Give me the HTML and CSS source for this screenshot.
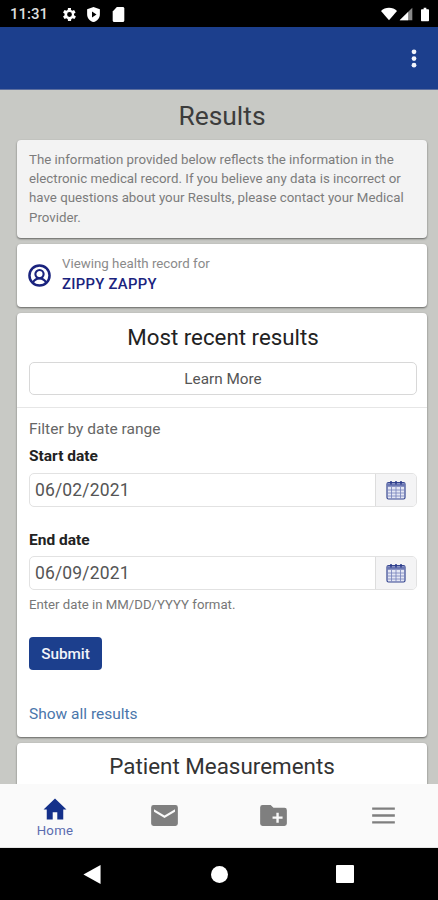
FILE: index.html
```html
<!DOCTYPE html>
<html lang="en">
<head>
<meta charset="utf-8">
<title>Results</title>
<link rel="stylesheet" href="styles.css">
</head>
<body>
<div class="phone">
  <div class="status">
    <div class="status-left">
      <span class="time">11:31</span>
      <svg class="st-ic" viewBox="3.400 2 20 20"><path fill="#fff" fill-rule="evenodd" d="M19.400 13a7.500 7.500 0 0 0 0-2l2.100-1.600-2-3.500-2.500 1a7.500 7.500 0 0 0-1.700-1L15.400 3.200h-4l-.4 2.700a7.500 7.500 0 0 0-1.700 1l-2.500-1-2 3.500L6.900 11a7.500 7.500 0 0 0 0 2l-2.100 1.600 2 3.500 2.500-1a7.500 7.500 0 0 0 1.700 1l.4 2.700h4l.4-2.700a7.500 7.500 0 0 0 1.700-1l2.500 1 2-3.500zM13.400 15.200a3.200 3.200 0 1 1 0-6.400 3.200 3.200 0 0 1 0 6.400z"/></svg>
      <svg class="st-ic" viewBox="2 2 20 20"><path fill="#fff" fill-rule="evenodd" d="M12 2 3.500 5v6.500c0 5 3.600 9.300 8.500 10.500 4.900-1.200 8.500-5.500 8.500-10.500V5zM10 8l6 4-6 4z"/></svg>
      <svg class="st-ic" viewBox="2.250 2 20 20"><path fill="#fff" d="M18 2h-8L4.500 8v12c0 1.100.9 2 2 2H18c1.100 0 2-.9 2-2V4c0-1.100-.9-2-2-2z"/></svg>
    </div>
    <div class="status-right">
      <svg class="st-wifi" viewBox="0 0 24 20"><path fill="#fff" d="M12 19.500 0 5.500C3.200 2.400 7.400.8 12 .8s8.800 1.600 12 4.700z"/></svg>
      <svg class="st-signal" viewBox="0 0 20 20"><path fill="#8a8a8a" d="M1 19 19 1v18z"/><path fill="#fff" d="M1 19 13 7v12z"/></svg>
      <svg class="st-batt" viewBox="0 0 12 20"><path fill="#fff" d="M4 0h4v2h2.500c.8 0 1.500.7 1.500 1.500V18.500c0 .8-.7 1.500-1.500 1.500h-9C.7 20 0 19.300 0 18.500V3.500C0 2.700.7 2 1.500 2H4z"/></svg>
    </div>
  </div>

  <header class="appbar">
    <svg class="kebab" viewBox="0 0 6 20"><circle cx="3" cy="3" r="2.500"/><circle cx="3" cy="10" r="2.500"/><circle cx="3" cy="17" r="2.500"/></svg>
  </header>

  <main class="content">
    <h1 class="page-title">Results</h1>

    <section class="card notice">
      The information provided below reflects the information in the electronic medical record. If you believe any data is incorrect or have questions about your Results, please contact your Medical Provider.
    </section>

    <section class="card patient">
      <svg class="at-ic" viewBox="0 0 24 24"><circle cx="12" cy="12" r="10.500" fill="none" stroke="#1a237e" stroke-width="2.600"/><circle cx="12" cy="10.500" r="4.300" fill="none" stroke="#1a237e" stroke-width="2.200"/><path d="M5 19.500c1.500-2.700 4-4.500 7-4.500s5.500 1.800 7 4.500" fill="none" stroke="#1a237e" stroke-width="2.200"/></svg>
      <div class="patient-text">
        <div class="viewing">Viewing health record for</div>
        <div class="patient-name">ZIPPY ZAPPY</div>
      </div>
    </section>

    <section class="card results">
      <div class="results-head">
        <h2 class="card-title">Most recent results</h2>
        <button class="learn">Learn More</button>
      </div>
      <div class="results-body">
        <div class="filter-label">Filter by date range</div>
        <label class="date-label">Start date</label>
        <div class="date-field">
          <span class="date-value">06/02/2021</span>
          <span class="date-btn">
            <svg class="cal" viewBox="0 0 20 20"><use href="#calendar"/></svg>
          </span>
        </div>
        <label class="date-label second">End date</label>
        <div class="date-field">
          <span class="date-value">06/09/2021</span>
          <span class="date-btn">
            <svg class="cal" viewBox="0 0 20 20"><use href="#calendar"/></svg>
          </span>
        </div>
        <div class="hint">Enter date in MM/DD/YYYY format.</div>
        <button class="submit">Submit</button>
        <a class="show-all">Show all results</a>
      </div>
    </section>

    <section class="card measurements">
      <h2 class="card-title">Patient Measurements</h2>
    </section>
  </main>

  <nav class="tabs">
    <div class="tab active">
      <svg class="tab-ic" viewBox="0 0 26 24"><path fill="#14308a" d="M13 .5 0.500 12.500H4V23.500h6.500v-8h5v8H22V12.500h3.500z"/></svg>
      <span class="tab-label">Home</span>
    </div>
    <div class="tab">
      <svg class="tab-ic" viewBox="0 0 28 22"><path fill="#7f7f7f" fill-rule="evenodd" d="M2.500 0h23A2.500 2.500 0 0 1 28 2.500v17a2.500 2.500 0 0 1-2.500 2.500h-23A2.500 2.500 0 0 1 0 19.500v-17A2.500 2.500 0 0 1 2.500 0zM3 4.500v2.600l11 6.400 11-6.400V4.500L14 11z"/></svg>
    </div>
    <div class="tab">
      <svg class="tab-ic" viewBox="0 0 28 22"><path fill="#7f7f7f" fill-rule="evenodd" d="M2.500 0H11l3 3h11.500A2.500 2.500 0 0 1 28 5.500v14a2.500 2.500 0 0 1-2.500 2.500h-23A2.500 2.500 0 0 1 0 19.500v-17A2.500 2.500 0 0 1 2.500 0zM17 8v4h-4v2.500h4v4h2.500v-4h4V12h-4V8z"/></svg>
    </div>
    <div class="tab menu">
      <svg class="tab-ic" viewBox="0 0 24 18"><path fill="#7f7f7f" d="M0 .5h24v2.500H0zM0 7.800h24v2.500H0zM0 15h24v2.500H0z"/></svg>
    </div>
  </nav>

  <div class="sysnav">
    <svg class="sys-back" viewBox="0 0 18 20"><path fill="#fff" d="M18 0v20L0 10z"/></svg>
    <span class="sys-home"></span>
    <span class="sys-recent"></span>
  </div>
</div>

<svg class="defs" width="0" height="0">
  <defs>
    <g id="calendar">
      <rect x="1" y="2.500" width="18" height="16.500" rx="1.500" fill="#e4e7f4" stroke="#35458f" stroke-width="1.200"/>
      <path d="M1 3.200h18V6.800H1z" fill="#6c78b4"/>
      <path d="M5 1v3.500M10 1v3.500M15 1v3.500" stroke="#2a3a8a" stroke-width="1.500" fill="none"/>
      <path d="M1.500 10h17M1.500 13h17M1.500 16h17M5.500 7v11.500M10 7v11.500M14.500 7v11.500" stroke="#7480ba" stroke-width=".8" fill="none"/>
    </g>
  </defs>
</svg>
</body>
</html>
```
FILE: styles.css
```css
* { box-sizing: border-box; }
html, body { margin: 0; padding: 0; }
body { font-family: Roboto, "Liberation Sans", sans-serif; background: #000; }
.phone { width: 438px; height: 900px; display: flex; flex-direction: column; overflow: hidden; position: relative; }

.status { height: 27px; flex: none; background: #000; color: #eee; display: flex; justify-content: space-between; align-items: center; padding: 1px 9px 0 10px; }
.status-left { display: flex; align-items: center; }
.time { font-size: 15px; font-weight: 500; width: 51.500px; color: #ddd; }
.st-ic { width: 15px; height: 15px; margin-right: 9.500px; display: block; }
.status-right { display: flex; align-items: center; gap: 2px; }
.st-wifi { width: 16px; height: 14px; display: block; }
.st-signal { width: 14px; height: 14px; display: block; }
.st-batt { width: 8px; height: 15px; display: block; margin-left: 6px; }

.appbar { height: 63px; flex: none; background: #1c3f8d; border-bottom: 1px solid #5d6f9f; display: flex; align-items: center; justify-content: flex-end; padding: 0 21px 0 0; }
.kebab { width: 6px; height: 19px; fill: #f2f5fb; display: block; }

.content { flex: 1; min-height: 0; background: #c8c9c5; padding: 0 11px 0 17px; overflow: hidden; display: flex; flex-direction: column; }
.page-title { margin: 12px 0 9px; height: 29px; line-height: 29px; font-size: 26.400px; font-weight: 400; text-align: center; color: #3c3c3c; flex: none; }

.card { background: #fff; border-radius: 4px; box-shadow: 0 1px 2px rgba(0,0,0,.5); flex: none; margin-bottom: 6px; }
.notice { background: #f3f3f3; height: 98px; padding: 10px 8px 0 12px; font-size: 13.300px; line-height: 19.200px; color: #7c7c7c; }
.patient { height: 63px; display: flex; align-items: center; padding-left: 11px; }
.at-ic { width: 23px; height: 23px; display: block; margin-right: 11px; margin-top: -1px; }
.patient-text { margin-top: -3px; }
.viewing { font-size: 13.300px; line-height: 16px; color: #8a8a8a; }
.patient-name { font-size: 14.800px; font-weight: 500; line-height: 16px; color: #1a237e; margin-top: 4px; letter-spacing: .3px; }

.results { height: 424px; }
.results-head { height: 95px; border-bottom: 1px solid #e6e6e6; padding: 0 10px 0 12px; text-align: center; }
.card-title { margin: 0; font-size: 22.300px; font-weight: 400; color: #222; line-height: 26px; padding-top: 11px; height: 49px; }
.learn { display: block; width: 100%; height: 33px; background: #fff; border: 1px solid #d8d8d8; border-radius: 5px; font: 400 15.300px Roboto, sans-serif; color: #555; padding: 0; }
.results-body { padding: 13px 10px 0 12px; display: flex; flex-direction: column; align-items: flex-start; }
.filter-label { font-size: 15.500px; line-height: 17px; color: #666; }
.date-label { font-size: 15.500px; font-weight: 700; line-height: 17px; color: #222; margin: 10px 0 8px; }
.date-label.second { margin: 25px 0 7px; }
.date-field { width: 100%; height: 34px; display: flex; border: 1px solid #e2e2e2; border-radius: 5px; overflow: hidden; flex: none; }
.date-value { flex: 1; font-size: 17.500px; line-height: 32px; padding-left: 5px; color: #555; letter-spacing: .15px; }
.date-btn { width: 41px; background: #f4f4f5; border-left: 1px solid #ddd; display: flex; align-items: center; justify-content: center; }
.cal { width: 20px; height: 20px; display: block; }
.hint { font-size: 13.200px; line-height: 14px; color: #777; margin-top: 8px; }
.submit { margin-top: 25px; width: 73px; height: 33px; background: #1c3f8d; color: #f2f4fa; border: 0; border-radius: 4px; font: 500 15.300px Roboto, sans-serif; padding: 0; flex: none; }
.show-all { margin-top: 36px; font-size: 15.500px; line-height: 17px; color: #4a76ab; }

.measurements { height: 60px; text-align: center; margin-bottom: 0; }
.measurements .card-title { padding-top: 10px; color: #333; font-size: 22.400px; }

.tabs { height: 64px; flex: none; background: #fafafa; display: grid; grid-template-columns: 110px 109px 109px 110px; border-bottom: 1px solid #e4e4e4; }
.tab { display: flex; flex-direction: column; align-items: center; padding-top: 21px; }
.tab-ic { display: block; width: 27px; height: 21px; }
.tab.active { padding-top: 14px; }
.tab.active .tab-ic { width: 24px; height: 22px; }
.tab.menu { padding-top: 23px; }
.tab.menu .tab-ic { width: 23px; height: 17px; }
.tab-label { font-size: 13.200px; line-height: 14px; color: #5a6cb0; margin-top: 4px; letter-spacing: .3px; }

.sysnav { height: 52px; flex: none; background: #000; position: relative; }
.sys-back { position: absolute; left: 83px; top: 17px; width: 18px; height: 19px; }
.sys-home { position: absolute; left: 211px; top: 18px; width: 17px; height: 17px; border-radius: 50%; background: #fff; }
.sys-recent { position: absolute; left: 336px; top: 17px; width: 18px; height: 18px; background: #fff; border-radius: 1px; }

.defs { position: absolute; }
```
